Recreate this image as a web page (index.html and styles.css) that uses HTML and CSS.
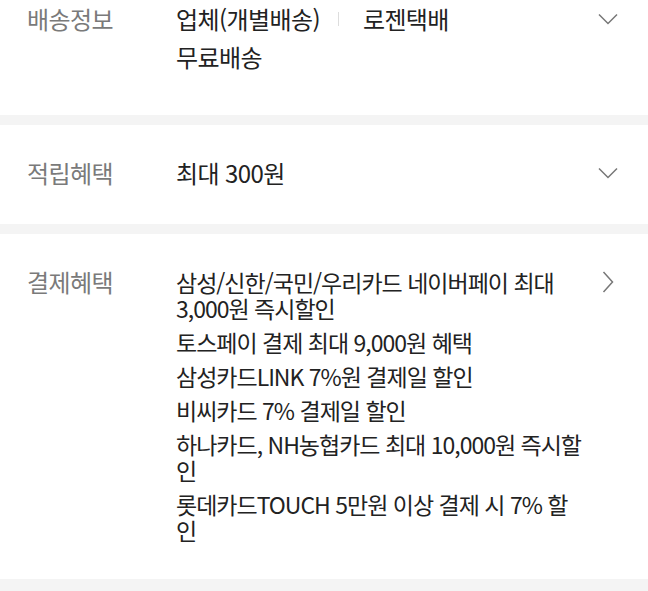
FILE: index.html
```html
<!DOCTYPE html>
<html lang="ko">
<head>
    <meta charset="UTF-8">
    <meta name="viewport" content="width=device-width, initial-scale=1.0">
    <title>상품 정보</title>
    <link rel="stylesheet" href="styles.css">
</head>
<body>
    <div class="info-list">
        <div class="info-section info-section--top">
            <div class="info-label">배송정보</div>
            <div class="info-value">
                <div class="delivery-line">
                    <span>업체(개별배송)</span>
                    <span class="divider"></span>
                    <span>로젠택배</span>
                </div>
                <div class="delivery-fee">무료배송</div>
            </div>
            <div class="info-arrow">
                <svg width="20" height="12" viewBox="0 0 20 12"><path d="M1 1.5 L10 10.5 L19 1.5" fill="none" stroke="#777" stroke-width="1.5"/></svg>
            </div>
        </div>

        <div class="info-section">
            <div class="info-label">적립혜택</div>
            <div class="info-value">최대 300원</div>
            <div class="info-arrow">
                <svg width="20" height="12" viewBox="0 0 20 12"><path d="M1 1.5 L10 10.5 L19 1.5" fill="none" stroke="#777" stroke-width="1.5"/></svg>
            </div>
        </div>

        <div class="info-section info-section--last">
            <div class="info-label">결제혜택</div>
            <ul class="info-value benefit-list">
                <li>삼성/신한/국민/우리카드 네이버페이 최대 3,000원 즉시할인</li>
                <li>토스페이 결제 최대 9,000원 혜택</li>
                <li>삼성카드LINK 7%원 결제일 할인</li>
                <li>비씨카드 7% 결제일 할인</li>
                <li>하나카드, NH농협카드 최대 10,000원 즉시할인</li>
                <li>롯데카드TOUCH 5만원 이상 결제 시 7% 할인</li>
            </ul>
            <div class="info-arrow">
                <svg width="12" height="22" viewBox="0 0 12 22"><path d="M1.5 1 L10.5 11 L1.5 21" fill="none" stroke="#777" stroke-width="1.5"/></svg>
            </div>
        </div>
    </div>
</body>
</html>
```

FILE: styles.css
```css
body {
    margin: 0;
    background: #f4f4f4;
    font-family: "Noto Sans CJK KR", "Noto Sans", sans-serif;
    color: #222;
}

.info-list {
    display: flex;
    flex-direction: column;
    gap: 10px;
    padding-bottom: 12px;
}

.info-section {
    display: flex;
    align-items: flex-start;
    background: #fff;
    padding: 35px 30px 38px 27px;
    font-size: 24px;
    line-height: 26px;
    letter-spacing: -0.6px;
}

.info-section--top {
    padding-top: 6px;
    padding-bottom: 45px;
}

.info-section--last {
    padding-bottom: 36px;
}

.info-label {
    flex: 0 0 149px;
    color: #7a7a7a;
}

.info-value {
    flex: 1;
    min-width: 0;
}

.delivery-line {
    display: flex;
    align-items: center;
}

.divider {
    width: 1px;
    height: 14px;
    background: #ddd;
    margin: 0 24px 0 18px;
}

.delivery-fee {
    margin-top: 12px;
}

.benefit-list {
    list-style: none;
    margin: 0;
    padding: 0;
    display: flex;
    flex-direction: column;
    gap: 8px;
    font-size: 23px;
    letter-spacing: -1px;
}

.info-arrow {
    flex: 0 0 20px;
    height: 26px;
    margin-left: 14px;
    display: flex;
    align-items: center;
    justify-content: center;
}
```
